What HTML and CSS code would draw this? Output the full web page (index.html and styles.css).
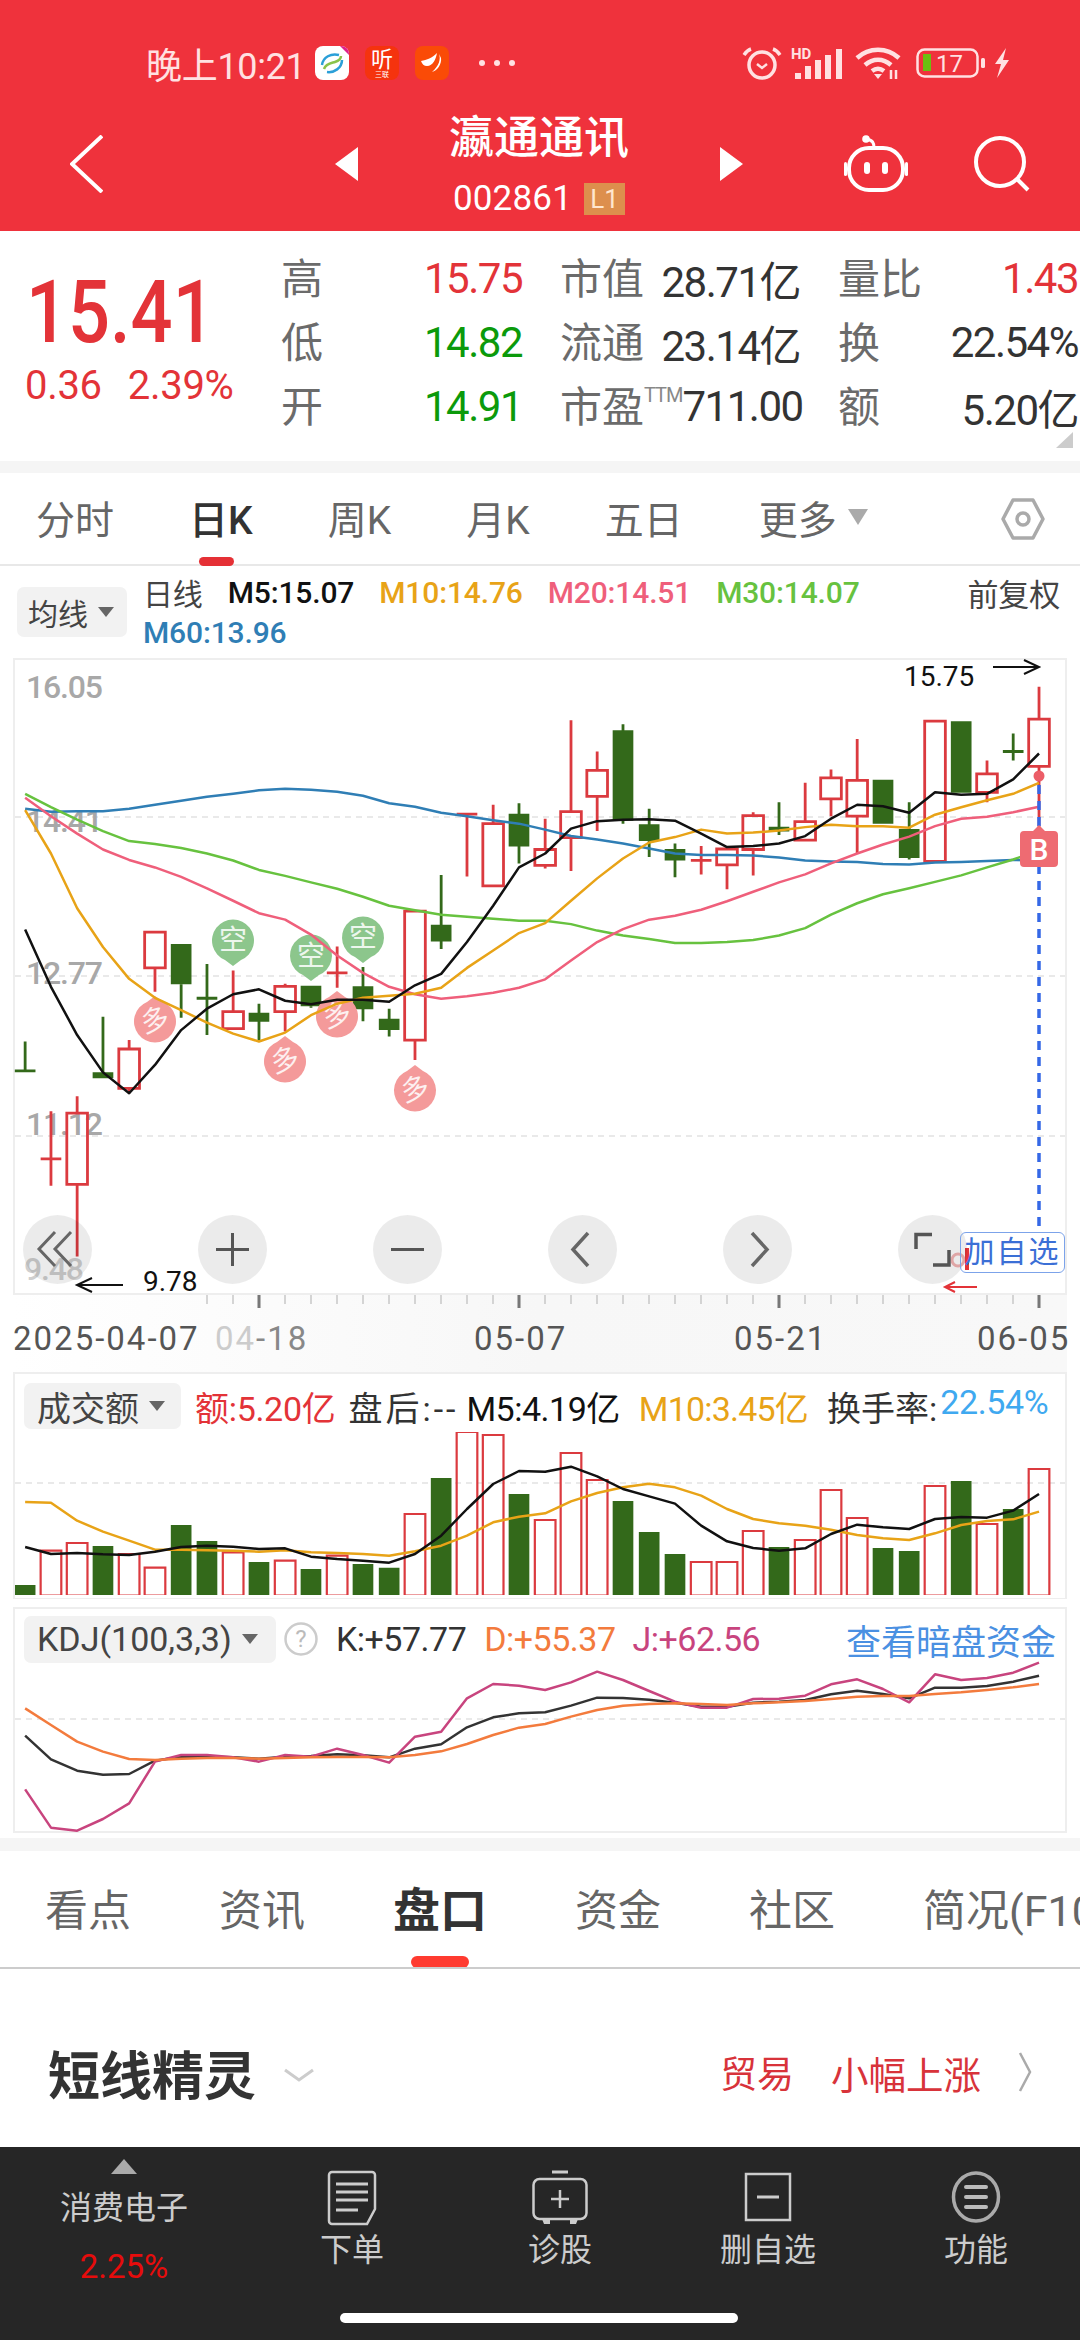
FILE: index.html
```html
<!DOCTYPE html>
<html lang="zh">
<head>
<meta charset="utf-8">
<title>瀛通通讯</title>
<link rel="stylesheet" href="styles.css">
</head>
<body>
<div class="page">
  <header class="header">
    <div class="status">
      <span class="time">晚上10:21</span>
      <div class="apps">
        <svg class="app" viewBox="0 0 34 34"><rect width="34" height="34" rx="8" fill="#fff"/><path d="M25 0h1a8 8 0 0 1 8 8v1z" fill="#e0218a"/><path d="M7 19c1-8 9-12 17-10" fill="none" stroke="#2b9fd8" stroke-width="2.5"/><path d="M9 23c2-6 8-6 11-7s6-3 6-6" fill="none" stroke="#8bc34a" stroke-width="2.5"/><path d="M12 26c7 1 15-4 15-12" fill="none" stroke="#2b9fd8" stroke-width="2.5"/></svg>
        <div class="app app-ting"><span class="ting-main">听</span><span class="ting-sub">三联</span></div>
        <svg class="app" viewBox="0 0 34 34"><rect width="34" height="34" rx="8" fill="#fa4b07"/><path d="M6 15c6-1 11-3 16-8-1 6-4 13-10 13-3 0-5-2-6-5z" fill="#fff"/><path d="M24 8c2 5 0 12-7 18 5-1 10-8 9-14z" fill="#fff"/></svg>
      </div>
      <div class="dots"><i></i><i></i><i></i></div>
      <div class="sys">
        <svg class="s-alarm" viewBox="0 0 40 34"><circle cx="20" cy="19" r="13" fill="none" stroke="#ffe1e2" stroke-width="3.5"/><path d="M15 18l5 4 5-4" fill="none" stroke="#ffe1e2" stroke-width="2.5"/><path d="M2 9c2-3 4-5 7-6M38 9c-2-3-4-5-7-6" fill="none" stroke="#ffe1e2" stroke-width="3.5"/></svg>
        <svg class="s-signal" viewBox="0 0 51 34"><text x="0" y="13" class="hd">HD</text><path d="M4 33h6v-6h-6zM14 33h6v-13h-6zM24 33h6v-19h-6zM34 33h6v-24h-6zM45 33h6v-30h-6z" fill="#ffe1e2"/></svg>
        <svg class="s-wifi" viewBox="0 0 46 34"><path d="M2 12c12-11 30-11 42 0M10 19c8-7 18-7 26 0M17 25c4-3 8-3 12 0" fill="none" stroke="#ffe1e2" stroke-width="4.5"/><path d="M19 28h8l-4 5z" fill="#ffe1e2"/><path d="M36 24v9M41 24v9" stroke="#ffe1e2" stroke-width="2.5"/></svg>
        <svg class="s-batt" viewBox="0 0 69 30"><rect x="1.5" y="1.5" width="60" height="27" rx="7" fill="none" stroke="#ffe1e2" stroke-width="2.5"/><rect x="7" y="6" width="8" height="17" fill="#6abf10"/><rect x="65" y="10" width="4" height="10" rx="1.5" fill="#ffe1e2"/><text x="20" y="24" class="batt-num">17</text></svg>
        <svg class="s-bolt" viewBox="0 0 16 32"><path d="M12 1L1 17h6l-4 14L15 13H9z" fill="#ffe1e2"/></svg>
      </div>
    </div>
    <div class="nav">
      <svg class="i-back" viewBox="0 0 33 58"><path d="M32 1L2 29l30 28" fill="none" stroke="#fff" stroke-width="4"/></svg>
      <svg class="i-tri" viewBox="0 0 23 34"><path d="M23 0v34L0 17z" fill="#fff"/></svg>
      <div class="title-block">
        <div class="stock-name">瀛通通讯</div>
        <div class="stock-code"><span>002861</span><span class="level">L1</span></div>
      </div>
      <svg class="i-tri" viewBox="0 0 23 34"><path d="M0 0v34l23-17z" fill="#fff"/></svg>
      <svg class="i-robot" viewBox="0 0 64 57"><path d="M30 13c0-5-1-8-8-9" fill="none" stroke="#fff" stroke-width="3"/><circle cx="22" cy="4" r="3.8" fill="#fff"/><rect x="5" y="13" width="54" height="42" rx="20" fill="none" stroke="#fff" stroke-width="4"/><rect x="20" y="27" width="6" height="12" rx="3" fill="#fff"/><rect x="38" y="27" width="6" height="12" rx="3" fill="#fff"/><rect x="0" y="27" width="3" height="14" rx="1.5" fill="#fff"/><rect x="61" y="27" width="3" height="14" rx="1.5" fill="#fff"/></svg>
      <svg class="i-search" viewBox="0 0 57 56"><circle cx="26" cy="26" r="24" fill="none" stroke="#fff" stroke-width="4"/><path d="M44 44l10 10" stroke="#fff" stroke-width="4"/></svg>
    </div>
  </header>

  <section class="quote">
    <div class="price-col">
      <div class="price">15.41</div>
      <div class="change"><span>0.36</span><span>2.39%</span></div>
    </div>
    <div class="q-grid">
      <div class="cell"><span class="lab">高</span><span class="val up">15.75</span></div>
      <div class="cell"><span class="lab">市值</span><span class="val">28.71亿</span></div>
      <div class="cell"><span class="lab">量比</span><span class="val up">1.43</span></div>
      <div class="cell"><span class="lab">低</span><span class="val down">14.82</span></div>
      <div class="cell"><span class="lab">流通</span><span class="val">23.14亿</span></div>
      <div class="cell"><span class="lab">换</span><span class="val">22.54%</span></div>
      <div class="cell"><span class="lab">开</span><span class="val down">14.91</span></div>
      <div class="cell"><span class="lab">市盈<em class="ttm">TTM</em></span><span class="val">711.00</span></div>
      <div class="cell"><span class="lab">额</span><span class="val">5.20亿</span></div>
    </div>
    <i class="corner"></i>
  </section>
  <div class="band"></div>

  <nav class="k-tabs">
    <span class="k-tab">分时</span>
    <span class="k-tab active">日K</span>
    <span class="k-tab">周K</span>
    <span class="k-tab">月K</span>
    <span class="k-tab">五日</span>
    <span class="k-tab more">更多<i class="tri-down"></i></span>
    <svg class="hex" viewBox="0 0 44 42"><path d="M12 2h20l10 19-10 19H12L2 21z" fill="none" stroke="#aaa" stroke-width="3.500" stroke-linejoin="round"/><circle cx="22" cy="21" r="6" fill="none" stroke="#aaa" stroke-width="3.500"/></svg>
  </nav>

  <div class="ma-row">
    <div class="pick pick-ma">均线<i class="tri-dark"></i></div>
    <div class="ma-lines">
      <div class="ma-line">
        <span class="ma-name">日线</span>
        <span class="c-black">M5:15.07</span>
        <span class="c-orange">M10:14.76</span>
        <span class="c-pink">M20:14.51</span>
        <span class="c-green">M30:14.07</span>
        <span class="fq">前复权</span>
      </div>
      <div class="ma-line"><span class="c-blue">M60:13.96</span></div>
    </div>
  </div>

  <div class="chart">
    <svg class="chart-svg" viewBox="15 660 1050 633">
      <path class="grid-l" d="M15 817H1065M15 976H1065M15 1136H1065"/>
      <text class="ax" x="26" y="698">16.05</text>
      <text class="ax" x="26" y="832">14.41</text>
      <text class="ax" x="26" y="984">12.77</text>
      <text class="ax" x="26" y="1135">11.12</text>
      <text class="ax ax-dim" x="24" y="1280">9.48</text>
      <g transform="translate(0 560) scale(.34439 .49745)">
        <path class="k-red" d="M148 1108V1258M118 1204H178M224 1078V1112M224 1255V1400M375 965V983M375 1062V1072M450 820V868M677 825V908M828 852V857M828 908V948M979 777V860M949 830H1009M1205 965V1005M1356 511V636M1326 511H1386M1432 492V530M1583 520V582M1583 614V620M1658 322V506M1658 558V625M1734 385V423M1734 475V545M2036 575V632M2006 604H2066M2111 613V662M2187 507V514M2187 582V634M2338 448V526M2413 421V438M2413 480V515M2489 360V443M2489 515V590M2866 403V430M2866 467V487M3017 255V320M3017 415V545"/>
        <path class="k-red" d="M194 1112h60v143h-60zM345 983h60v79h-60zM420 748h60v72h-60zM647 908h60v34h-60zM798 857h60v51h-60zM1175 706h60v259h-60zM1402 530h60v125h-60zM1553 582h60v32h-60zM1628 506h60v52h-60zM1704 423h60v52h-60zM2081 581h60v32h-60zM2157 514h60v68h-60zM2308 526h60v37h-60zM2383 438h60v42h-60zM2459 443h60v72h-60zM2685 324h60v282h-60zM2836 430h60v37h-60zM2987 320h60v95h-60z"/>
        <path class="k-green" d="M73 968V1027M43 1027H103M299 918V1030M526 853V920M601 812V955M571 881H631M752 892V965M903 897V900M1054 818V927M1130 902V958M1281 633V782M1507 489V610M1809 330V530M1885 500V597M1960 570V638M2262 487V553M2640 487V602M2942 349V403M2912 385H2972"/>
        <path class="k-fill" d="M269 1030h60v12h-60zM496 772h60v81h-60zM722 910h60v18h-60zM873 856h60v41h-60zM1024 857h60v46h-60zM1100 922h60v23h-60zM1251 733h60v34h-60zM1477 510h60v66h-60zM1779 342h60v182h-60zM1855 531h60v34h-60zM1930 581h60v23h-60zM2232 536h60v10h-60zM2534 442h60v88h-60zM2610 541h60v58h-60zM2761 324h60v144h-60z"/>
      </g>
      <g class="mk-up">
        <path d="M155 996l8 6a21 21 0 1 1-16 0z"/>
        <path d="M285 1036l8 6a21 21 0 1 1-16 0z"/>
        <path d="M337 991l8 6a21 21 0 1 1-16 0z"/>
        <path d="M415 1065l8 6a21 21 0 1 1-16 0z"/>
      </g>
      <g class="mk-dn">
        <path d="M233 966l-8-6a21 21 0 1 1 16 0z"/>
        <path d="M311 981l-8-6a21 21 0 1 1 16 0z"/>
        <path d="M363 963l-8-6a21 21 0 1 1 16 0z"/>
      </g>
      <text class="mk" x="155" y="1030" transform="rotate(-15 155 1020)">多</text>
      <text class="mk" x="285" y="1070" transform="rotate(-15 285 1060)">多</text>
      <text class="mk" x="337" y="1025" transform="rotate(-15 337 1015)">多</text>
      <text class="mk" x="415" y="1099" transform="rotate(-15 415 1089)">多</text>
      <text class="mk" x="233" y="950">空</text>
      <text class="mk" x="311" y="966">空</text>
      <text class="mk" x="363" y="947">空</text>
      <g transform="translate(0 560) scale(.34439 .49745)">
        <polyline class="ln l-blue" points="73,500 148,506 224,505 299,505 375,500 450,492 526,484 601,476 677,470 752,463 828,460 903,462 979,466 1054,474 1130,489 1205,496 1281,508 1356,515 1432,523 1507,530 1583,542 1658,555 1734,562 1809,570 1885,580 1960,590 2036,593 2111,593 2187,594 2262,598 2338,604 2413,606 2489,607 2564,611 2640,612 2715,608 2791,607 2866,605 2942,603 3017,604"/>
        <polyline class="ln l-grn" points="73,470 148,497 224,522 299,545 375,565 450,571 526,579 601,590 677,604 752,623 828,635 903,648 979,661 1054,677 1130,695 1205,704 1281,713 1356,717 1432,721 1507,725 1583,725 1658,732 1734,745 1809,755 1885,762 1960,770 2036,770 2111,768 2187,764 2262,755 2338,740 2413,713 2489,690 2564,672 2640,660 2715,647 2791,634 2866,618 2942,602 3017,584"/>
        <polyline class="ln l-pink" points="73,478 148,515 224,550 299,582 375,603 450,618 526,637 601,660 677,685 752,710 828,723 903,753 979,795 1054,830 1130,858 1205,873 1281,882 1356,877 1432,870 1507,860 1583,843 1658,805 1734,768 1809,742 1885,723 1960,715 2036,703 2111,686 2187,667 2262,648 2338,632 2413,610 2489,590 2564,572 2640,556 2715,535 2791,520 2866,516 2942,507 3017,496"/>
        <polyline class="ln l-org" points="73,503 148,590 224,700 299,778 375,842 450,880 526,905 601,930 677,952 752,968 828,950 903,915 979,892 1054,880 1130,876 1205,872 1281,860 1356,820 1432,785 1507,750 1583,730 1658,685 1734,640 1809,600 1885,568 1960,557 2036,542 2111,550 2187,548 2262,544 2338,537 2413,532 2489,535 2564,535 2640,538 2715,512 2791,497 2866,483 2942,470 3017,448"/>
        <polyline class="ln l-blk" points="73,743 148,858 224,955 299,1030 375,1072 450,1015 526,945 601,902 677,873 752,863 828,886 903,893 979,884 1054,884 1130,888 1205,855 1281,832 1356,768 1432,695 1507,618 1583,590 1658,540 1734,525 1809,522 1885,521 1960,524 2036,550 2111,577 2187,575 2262,570 2338,555 2413,520 2489,492 2564,495 2640,508 2715,467 2791,472 2866,470 2942,441 3017,389"/>
      </g>
      <path class="blue-dash" d="M1039 785V1232"/>
      <circle class="b-dot" cx="1039" cy="776" r="5.5"/>
      <path class="b-tag" d="M1039 825l6 6h9a4 4 0 0 1 4 4v28a4 4 0 0 1-4 4h-30a4 4 0 0 1-4-4v-28a4 4 0 0 1 4-4h9z"/>
      <text class="b-text" x="1039" y="860">B</text>
      <text class="hl" x="904" y="686">15.75</text>
      <path class="arr" d="M993 667h45M1024 660l15 7-15 7"/>
      <text class="hl" x="143" y="1291">9.78</text>
      <path class="arr" d="M123 1285H77M92 1278l-15 7 15 7"/>
      <circle class="q-dot" cx="958" cy="1260" r="6"/>
      <path class="arr-r" d="M967 1248v22"/>
      <path class="arr-r2" d="M977 1287H945M955 1282l-10 5 10 5"/>
    </svg>
    <div class="ctrls">
      <div class="ctrl"><svg viewBox="0 0 69 69"><path d="M32 17L16 34l16 17M48 17L32 34l16 17" fill="none" stroke="#666" stroke-width="3"/></svg></div>
      <div class="ctrl"><svg viewBox="0 0 69 69"><path d="M18 34.500H51M34.500 18V51" fill="none" stroke="#555" stroke-width="3"/></svg></div>
      <div class="ctrl"><svg viewBox="0 0 69 69"><path d="M18 34.500H51" fill="none" stroke="#555" stroke-width="3"/></svg></div>
      <div class="ctrl"><svg viewBox="0 0 69 69"><path d="M40 18L25 34.500l15 16.500" fill="none" stroke="#666" stroke-width="3.500"/></svg></div>
      <div class="ctrl"><svg viewBox="0 0 69 69"><path d="M29 18l15 16.500L29 51" fill="none" stroke="#666" stroke-width="3.500"/></svg></div>
      <div class="ctrl"><svg viewBox="0 0 69 69"><path d="M18 34V19.500h16M35 50h16V35" fill="none" stroke="#555" stroke-width="3.500"/></svg></div>
    </div>
    <div class="add-btn">加自选</div>
  </div>

  <div class="date-strip">
    <svg class="ticks" viewBox="13 0 1054 16">
      <path class="t-thin" d="M207 0v9M233 0v9M285 0v9M311 0v9M337 0v9M363 0v9M389 0v9M415 0v9M441 0v9M467 0v9M493 0v9M545 0v9M571 0v9M597 0v9M623 0v9M649 0v9M675 0v9M701 0v9M727 0v9M753 0v9M805 0v9M831 0v9M857 0v9M883 0v9M909 0v9M935 0v9M961 0v9M987 0v9M1013 0v9"/>
      <path class="t-bold" d="M259 0v13M519 0v13M779 0v13M1039 0v13"/>
    </svg>
    <div class="dates">
      <span>2025-04-07</span>
      <span class="dim"><em>04</em>-18</span>
      <span>05-07</span>
      <span>05-21</span>
      <span>06-05</span>
    </div>
  </div>

  <div class="pane pane-vol">
    <div class="pane-head">
      <div class="pick pick-vol">成交额<i class="tri-dark"></i></div>
      <span class="c-red ph-a">额:5.20亿</span>
      <span class="c-dark ph-b">盘后:--</span>
      <span class="c-black ph-c">M5:4.19亿</span>
      <span class="c-orange ph-d">M10:3.45亿</span>
      <span class="c-dark ph-e">换手率:<b class="c-sky">22.54%</b></span>
    </div>
    <svg class="vol-svg" viewBox="15 1433 1050 163">
      <path class="grid-l" d="M15 1484H1065"/>
      <g transform="translate(0 1340) scale(.34439 .33333)">
        <path class="k-fill" d="M43 738h60v32h-60zM269 621h60v149h-60zM496 558h60v212h-60zM571 606h60v164h-60zM722 669h60v101h-60zM873 690h60v80h-60zM1024 675h60v95h-60zM1100 686h60v84h-60zM1251 417h60v353h-60zM1477 465h60v305h-60zM1779 486h60v284h-60zM1855 579h60v191h-60zM1930 645h60v125h-60zM2232 624h60v146h-60zM2534 627h60v143h-60zM2610 636h60v134h-60zM2761 426h60v344h-60zM2912 510h60v260h-60z"/>
        <path class="k-red thin" d="M118 635h60v135h-60zM194 612h60v158h-60zM345 645h60v125h-60zM420 686h60v84h-60zM647 640h60v130h-60zM798 665h60v105h-60zM949 650h60v120h-60zM1175 525h60v245h-60zM1326 279h60v491h-60zM1402 288h60v482h-60zM1553 543h60v227h-60zM1628 342h60v428h-60zM1704 423h60v347h-60zM2006 669h60v101h-60zM2081 669h60v101h-60zM2157 576h60v194h-60zM2308 603h60v167h-60zM2383 453h60v317h-60zM2459 537h60v233h-60zM2685 441h60v329h-60zM2836 555h60v215h-60zM2987 390h60v380h-60z"/>
        <polyline class="ln l-org" points="73,489 148,491 224,545 299,578 375,605 450,632 526,632 601,634 677,635 752,638 828,634 903,640 979,642 1054,645 1130,650 1205,637 1281,620 1356,590 1432,550 1507,533 1583,523 1658,487 1734,462 1809,445 1885,434 1960,445 2036,470 2111,510 2187,540 2262,553 2338,560 2413,572 2489,588 2564,598 2640,603 2715,583 2791,558 2866,546 2942,541 3017,518"/>
        <polyline class="ln l-blk" points="73,624 148,645 224,642 299,646 375,648 450,638 526,624 601,620 677,623 752,630 828,628 903,653 979,660 1054,665 1130,671 1205,645 1281,590 1356,510 1432,435 1507,396 1583,398 1658,383 1734,412 1809,450 1885,472 1960,494 2036,560 2111,607 2187,627 2262,635 2338,628 2413,585 2489,557 2564,565 2640,570 2715,540 2791,534 2866,536 2942,515 3017,465"/>
      </g>
    </svg>
  </div>

  <div class="pane pane-kdj">
    <div class="pane-head">
      <div class="pick pick-kdj">KDJ(100,3,3)<i class="tri-dark"></i></div>
      <svg class="help" viewBox="0 0 34 34"><circle cx="17" cy="17" r="15.500" fill="none" stroke="#ccc" stroke-width="2.500"/><text x="17" y="25" class="help-q">?</text></svg>
      <span class="c-dark kd-k">K:+57.77</span>
      <span class="c-dorg kd-d">D:+55.37</span>
      <span class="c-mag kd-j">J:+62.56</span>
      <span class="c-link kd-l">查看暗盘资金</span>
    </div>
    <svg class="kdj-svg" viewBox="15 1660 1050 171">
      <path class="grid-l" d="M15 1719H1065"/>
      <g transform="translate(0 1340) scale(.34439 .33333)">
        <polyline class="ln l-kk" points="73,1187 148,1258 224,1292 299,1304 375,1302 450,1262 526,1250 601,1250 677,1252 752,1256 828,1250 903,1248 979,1243 1054,1246 1130,1252 1205,1226 1281,1213 1356,1162 1432,1132 1507,1120 1583,1117 1658,1097 1734,1073 1809,1074 1885,1079 1960,1088 2036,1100 2111,1100 2187,1088 2262,1085 2338,1080 2413,1063 2489,1052 2564,1062 2640,1075 2715,1043 2791,1043 2866,1038 2942,1025 3017,1007"/>
        <polyline class="ln l-jj" points="73,1348 148,1463 224,1472 299,1437 375,1390 450,1265 526,1245 601,1245 677,1252 752,1265 828,1245 903,1250 979,1226 1054,1245 1130,1268 1205,1190 1281,1175 1356,1075 1432,1032 1507,1037 1583,1050 1658,1027 1734,995 1809,1020 1885,1053 1960,1085 2036,1103 2111,1103 2187,1077 2262,1076 2338,1067 2413,1033 2489,1018 2564,1047 2640,1087 2715,1003 2791,1020 2866,1014 2942,998 3017,968"/>
        <polyline class="ln l-dd" points="73,1105 148,1155 224,1205 299,1235 375,1257 450,1260 526,1256 601,1254 677,1254 752,1256 828,1254 903,1252 979,1251 1054,1251 1130,1252 1205,1245 1281,1234 1356,1212 1432,1185 1507,1163 1583,1152 1658,1130 1734,1110 1809,1097 1885,1092 1960,1090 2036,1092 2111,1095 2187,1090 2262,1087 2338,1083 2413,1077 2489,1070 2564,1068 2640,1068 2715,1062 2791,1057 2866,1050 2942,1042 3017,1032"/>
      </g>
    </svg>
  </div>
  <div class="band band-2"></div>

  <nav class="s-tabs">
    <span class="s-tab">看点</span>
    <span class="s-tab">资讯</span>
    <span class="s-tab active">盘口</span>
    <span class="s-tab">资金</span>
    <span class="s-tab">社区</span>
    <span class="s-tab">简况(F10)</span>
  </nav>

  <section class="spirit">
    <h2 class="spirit-title">短线精灵</h2>
    <svg class="sp-v" viewBox="0 0 32 14"><path d="M2 2l14 10L30 2" fill="none" stroke="#ccc" stroke-width="3"/></svg>
    <span class="sp-a">贸易</span>
    <span class="sp-b">小幅上涨</span>
    <svg class="sp-r" viewBox="0 0 14 40"><path d="M2 1l10 19L2 39" fill="none" stroke="#aaa" stroke-width="2.500"/></svg>
  </section>

  <footer class="bar">
    <div class="bar-first">
      <i class="tri-up"></i>
      <span class="bf-name">消费电子</span>
      <span class="bf-pct">2.25%</span>
    </div>
    <div class="bar-item">
      <svg class="bi" viewBox="0 0 56 56"><path d="M8 2h40a3 3 0 0 1 3 3v34l-8 15H8a3 3 0 0 1-3-3V5a3 3 0 0 1 3-3z" fill="none" stroke="#ccc" stroke-width="2.500"/><path d="M12 14h32M12 22h32M12 30h32M12 40h22" stroke="#ccc" stroke-width="3"/></svg>
      <span>下单</span>
    </div>
    <div class="bar-item">
      <svg class="bi" viewBox="0 0 56 56"><path d="M20 2h16" stroke="#ccc" stroke-width="3"/><rect x="1.500" y="9" width="53" height="40" rx="6" fill="none" stroke="#ccc" stroke-width="2.500"/><path d="M28 20v18M19 29h18" stroke="#ccc" stroke-width="2.500"/><path d="M10 49h8v5h-6zM38 49h8l-2 5h-6z" fill="#ccc"/></svg>
      <span>诊股</span>
    </div>
    <div class="bar-item">
      <svg class="bi" viewBox="0 0 56 56"><rect x="6" y="4" width="44" height="46" fill="none" stroke="#ccc" stroke-width="2.500"/><path d="M17 27h22" stroke="#ccc" stroke-width="3"/></svg>
      <span>删自选</span>
    </div>
    <div class="bar-item">
      <svg class="bi" viewBox="0 0 56 56"><ellipse cx="28" cy="27" rx="22.500" ry="24" fill="none" stroke="#aaa" stroke-width="3.500"/><path d="M18 17h20M18 27h20M18 37h20" stroke="#bbb" stroke-width="4" stroke-linecap="round"/></svg>
      <span>功能</span>
    </div>
    <i class="home"></i>
  </footer>
</div>
</body>
</html>
```
FILE: styles.css
```css
* { box-sizing: border-box; }
html, body { margin: 0; padding: 0; background: #fff; }
body { font-family: Roboto, "Noto Sans CJK SC", sans-serif; }
.page { width: 1080px; height: 2340px; overflow: hidden; }
i, em { font-style: normal; display: block; }

/* header */
.header { height: 231px; background: #ef323c; color: #fff; }
.status { height: 100px; padding: 26px 70px 0 146px; display: flex; align-items: center; color: #ffe1e2; }
.time { font-size: 36px; width: 169px; letter-spacing: -.3px; white-space: nowrap; }
.apps { display: flex; gap: 16px; }
.app { width: 34px; height: 34px; display: block; }
.app-ting { background: #f5330e; border-radius: 8px; color: #fff; display: flex; flex-direction: column; align-items: center; line-height: 1; }
.ting-main { font-size: 22px; margin-top: 3px; }
.ting-sub { font-size: 7px; margin-top: 1px; }
.dots { display: flex; gap: 9px; margin-left: 30px; }
.dots i { width: 6px; height: 6px; border-radius: 50%; background: #ffe1e2; }
.sys { margin-left: auto; display: flex; align-items: center; }
.s-alarm { width: 40px; height: 34px; }
.s-signal { width: 51px; height: 34px; margin-left: 9px; }
.s-wifi { width: 46px; height: 34px; margin-left: 13px; }
.s-batt { width: 69px; height: 30px; margin-left: 15px; }
.s-bolt { width: 16px; height: 32px; margin-left: 9px; }
.hd { font: 700 15px Roboto, sans-serif; fill: #ffe1e2; }
.batt-num { font: 400 24px Roboto, sans-serif; fill: #ffe1e2; }

.nav { height: 131px; padding: 0 0 4px 70px; display: flex; align-items: center; }
.i-back { width: 33px; height: 58px; margin-right: 232px; }
.i-tri { width: 23px; height: 34px; }
.title-block { width: 362px; text-align: center; }
.stock-name { font-size: 45px; line-height: 56px; font-weight: 500; }
.stock-code { margin-top: 14px; height: 36px; display: flex; align-items: center; justify-content: center; font-size: 35px; gap: 12px; letter-spacing: .2px; }
.level { width: 41px; height: 32px; background: #dd8f4d; font-size: 26px; line-height: 32px; color: #ffe6cf; text-align: center; letter-spacing: 0; }
.i-robot { width: 64px; height: 57px; margin-left: 101px; }
.i-search { width: 57px; height: 56px; margin-left: 66px; }

/* quote */
.quote { height: 230px; display: flex; position: relative; }
.price-col { width: 281px; padding-left: 26px; }
.price { font-size: 87px; line-height: 100px; margin-top: 31px; color: #e33338; font-weight: 500; transform: scaleX(.85); transform-origin: 0 0; white-space: nowrap; }
.change { display: flex; gap: 26px; font-size: 40px; line-height: 46px; color: #e33338; margin-top: 1px; margin-left: -1px; letter-spacing: -.3px; }
.q-grid { width: 797px; padding-top: 15px; display: grid; grid-template-columns: 241px 240px 240px; column-gap: 38px; grid-auto-rows: 64px; }
.cell { display: flex; justify-content: space-between; align-items: center; white-space: nowrap; }
.lab { font-size: 42px; color: #6b6b6b; display: flex; margin-bottom: 6px; }
.val { font-size: 42px; color: #333; letter-spacing: -1.500px; }
.val.up { color: #e33338; }
.val.down { color: #0b9a0b; }
.ttm { font-size: 20px; color: #888; letter-spacing: -1px; margin-top: 10px; }
.corner { position: absolute; right: 7px; bottom: 13px; width: 17px; height: 16px; background: #ccc; clip-path: polygon(100% 0, 100% 100%, 0 100%); }
.band { height: 12px; background: #f5f5f5; }
.band-2 { margin-top: 5px; height: 13px; }

/* k tabs */
.k-tabs { height: 93px; border-bottom: 2px solid #e8e8e8; padding: 0 35px 0 36px; display: flex; align-items: center; gap: 75px; }
.k-tab { font-size: 39px; color: #666; position: relative; white-space: nowrap; display: flex; align-items: center; margin-top: -4px; }
.k-tab.active { color: #333; font-weight: 500; }
.k-tab.active::after { content: ""; position: absolute; left: 10px; top: 68px; width: 35px; height: 9px; background: #e53035; border-radius: 5px; }
.k-tab.more { margin-left: 1px; }
.tri-down { width: 0; height: 0; margin-left: 11px; border: 10px solid transparent; border-top: 16px solid #aaa; border-bottom: 0; }
.hex { width: 44px; height: 42px; margin-left: auto; }

/* ma row */
.ma-row { height: 92px; padding: 6px 20px 0 17px; display: flex; }
.pick { background: #f2f2f2; border-radius: 7px; color: #444; display: flex; align-items: center; white-space: nowrap; }
.pick-ma { width: 110px; height: 50px; margin-top: 15px; padding-left: 11px; font-size: 30px; }
.tri-dark { width: 0; height: 0; margin-left: 10px; border: 8px solid transparent; border-top: 10px solid #666; border-bottom: 0; }
.ma-lines { flex: 1; margin-left: 16px; }
.ma-line { height: 40px; display: flex; align-items: center; gap: 25px; font-size: 30px; font-weight: 500; white-space: nowrap; letter-spacing: -.15px; }
.ma-name, .fq { font-weight: 400; color: #444; }
.fq { margin-left: auto; font-size: 31px; }
.c-black { color: #111; }
.c-orange { color: #e8a317; }
.c-pink { color: #ef5f7b; }
.c-green { color: #67c23f; }
.c-blue { color: #2f7eb5; }
.c-red { color: #e33338; }
.c-dark { color: #333; }
.c-sky { color: #3fa9f0; font-weight: 400; }
.c-dorg { color: #f37b3d; }
.c-mag { color: #c8447e; }
.c-link { color: #4a90e2; }

/* chart */
.chart { width: 1054px; height: 637px; margin-left: 13px; border: 2px solid #eee; position: relative; }
.chart-svg { display: block; width: 1050px; height: 633px; overflow: visible; }
.grid-l { fill: none; stroke: #e2e2e2; stroke-width: 1.500; stroke-dasharray: 6 5; }
.ax { font: 500 32px Roboto, sans-serif; fill: #a8a8a8; letter-spacing: -1.200px; }
.ax-dim { fill: #cfcfcf; }
.k-red { fill: none; stroke: #db3a3f; stroke-width: 2.800; vector-effect: non-scaling-stroke; }
.k-red.thin { stroke-width: 2.200; }
.k-green { fill: none; stroke: #33691a; stroke-width: 2.800; vector-effect: non-scaling-stroke; }
.k-fill { fill: #33691a; }
.ln { fill: none; stroke-width: 2.500; vector-effect: non-scaling-stroke; stroke-linejoin: round; }
.l-blue { stroke: #2f7eb5; }
.l-grn { stroke: #67c23f; }
.l-pink { stroke: #ef5f7b; }
.l-org { stroke: #e8a317; }
.l-blk { stroke: #111; }
.l-kk { stroke: #333; }
.l-jj { stroke: #c8447e; }
.l-dd { stroke: #f37b3d; }
.mk-up { fill: #f49a9a; }
.mk-dn { fill: #8cc68c; }
.mk { font: 400 28px "Noto Sans CJK SC", sans-serif; fill: #fff; text-anchor: middle; opacity: .85; }
.blue-dash { fill: none; stroke: #3568e6; stroke-width: 3.500; stroke-dasharray: 9 7; }
.b-dot { fill: #ec5d67; }
.b-tag { fill: #ee6b72; }
.b-text { font: 500 30px Roboto, sans-serif; fill: #fff; text-anchor: middle; }
.hl { font: 400 28px Roboto, sans-serif; fill: #111; }
.arr { fill: none; stroke: #111; stroke-width: 2; }
.arr-r { fill: none; stroke: #e33338; stroke-width: 4; }
.arr-r2 { fill: none; stroke: #e33338; stroke-width: 2; }
.q-dot { fill: none; stroke: #f2b5b5; stroke-width: 3; }
.ctrls { position: absolute; left: 8px; top: 555px; display: flex; gap: 106px; }
.ctrl { width: 69px; height: 69px; border-radius: 50%; background: rgba(0, 0, 0, .08); }
.ctrl svg { display: block; width: 69px; height: 69px; }
.add-btn { position: absolute; right: 0; top: 572px; width: 105px; height: 41px; border: 1.500px solid #7ca3ea; border-radius: 6px; color: #3b6fd6; font-size: 30px; line-height: 38px; text-align: center; letter-spacing: 2px; }

/* dates */
.date-strip { width: 1054px; height: 77px; margin-left: 13px; background: linear-gradient(90deg, #fff 0, #f7f7f7 50%, #f8f8f8 100%); }
.ticks { display: block; width: 1054px; height: 16px; }
.t-thin { stroke: #c8c8c8; stroke-width: 1.500; fill: none; }
.t-bold { stroke: #777; stroke-width: 3; fill: none; }
.dates { margin-top: 9px; display: grid; grid-template-columns: 202px 259px 260px 243px 90px; font-size: 33px; line-height: 38px; letter-spacing: 2px; color: #555; white-space: nowrap; }
.dates .dim { color: #888; display: flex; }
.dates em { color: #ccc; }

/* panes */
.pane { width: 1054px; margin-left: 13px; border: 2px solid #eee; }
.pane-vol { height: 227px; border-bottom-width: 1px; }
.pane-kdj { height: 226px; margin-top: 8px; }
.pane-head { display: flex; align-items: center; padding: 9px 0 0 9px; font-size: 34px; white-space: nowrap; }
.pane-vol .pane-head { height: 58px; padding-top: 6px; }
.pane-kdj .pane-head { height: 51px; }
.pick-vol { width: 157px; height: 46px; padding-left: 13px; font-size: 34px; }
.pick-kdj { width: 252px; height: 47px; padding-left: 13px; font-size: 34px; }
.ph-a { margin-left: 14px; letter-spacing: -.3px; }
.ph-b { margin-left: 13px; width: 118px; letter-spacing: 3px; }
.ph-c { letter-spacing: -.5px; }
.ph-d { margin-left: 19px; letter-spacing: -.8px; }
.ph-e { margin-left: 19px; display: flex; }
.ph-e b { margin-left: 3px; letter-spacing: -.4px; }
.vol-svg { display: block; width: 1050px; height: 163px; }
.kdj-svg { display: block; width: 1050px; height: 171px; overflow: visible; }
.help { width: 34px; height: 34px; margin-left: 8px; }
.help-q { font: 400 24px Roboto, sans-serif; fill: #bbb; text-anchor: middle; }
.kd-k, .kd-d, .kd-j { letter-spacing: -.5px; }
.kd-k { margin-left: 18px; }
.kd-d { margin-left: 18px; }
.kd-j { margin-left: 17px; }
.kd-l { margin-left: auto; margin-right: 9px; font-size: 35px; }

/* stock tabs */
.s-tabs { height: 118px; border-bottom: 2px solid #ccc; padding: 0 0 5px 45px; display: flex; align-items: center; gap: 88px; white-space: nowrap; overflow: hidden; }
.s-tab { font-size: 43px; color: #666; position: relative; }
.s-tab.active { font-size: 47px; font-weight: 700; color: #333; }
.s-tab.active::after { content: ""; position: absolute; left: 18px; top: 84px; width: 58px; height: 12px; border-radius: 6px; background: #ff3b30; }

/* spirit */
.spirit { height: 178px; padding: 28px 48px 0; display: flex; align-items: center; white-space: nowrap; }
.spirit-title { margin: 0; font-size: 52px; font-weight: 700; color: #333; letter-spacing: 0; }
.sp-v { width: 32px; height: 14px; margin-left: 27px; margin-top: 6px; }
.sp-a { margin-left: auto; font-size: 37px; color: #d8333a; }
.sp-b { margin-left: 37px; font-size: 37.500px; color: #d8333a; }
.sp-r { width: 14px; height: 40px; margin-left: 37px; }

/* bottom bar */
.bar { height: 193px; background: #262626; display: flex; position: relative; color: #ccc; }
.bar-first { width: 248px; padding-top: 12px; display: flex; flex-direction: column; align-items: center; }
.tri-up { width: 0; height: 0; border: 13px solid transparent; border-bottom: 15px solid #aaa; border-top: 0; }
.bf-name { font-size: 32px; line-height: 40px; margin-top: 14px; }
.bf-pct { font-size: 33px; line-height: 40px; margin-top: 19px; color: #e60c0c; }
.bar-item { width: 208px; padding-top: 23px; display: flex; flex-direction: column; align-items: center; font-size: 32px; line-height: 40px; }
.bi { width: 56px; height: 56px; display: block; margin-bottom: 4px; }
.home { position: absolute; left: 340px; top: 166px; width: 398px; height: 10px; border-radius: 5px; background: #fff; }
```
